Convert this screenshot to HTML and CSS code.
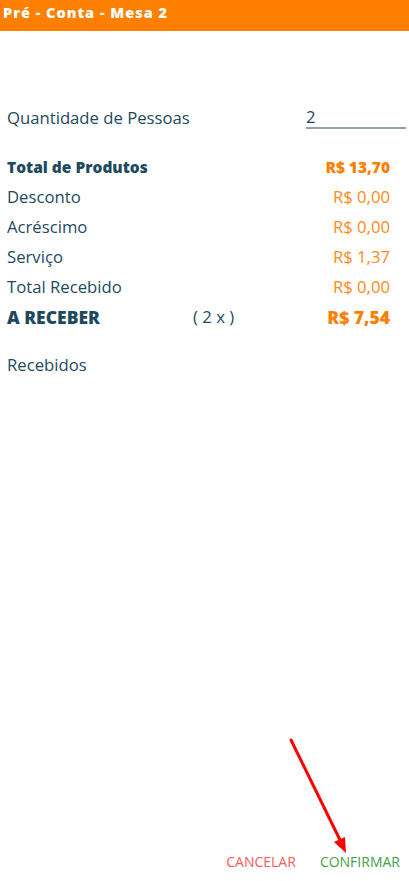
FILE: index.html
```html
<!DOCTYPE html>
<html lang="pt">
<head>
<meta charset="utf-8">
<title>Pré - Conta - Mesa 2</title>
<link rel="stylesheet" href="styles.css">
</head>
<body>
<div class="app">
  <header class="bar">Pré - Conta - Mesa 2</header>
  <main class="content">
    <div class="people">
      <span class="people-label">Quantidade de Pessoas</span>
      <span class="people-input">2</span>
    </div>
    <div class="totals">
      <div class="row strong"><span>Total de Produtos</span><span class="val">R$ 13,70</span></div>
      <div class="row"><span>Desconto</span><span class="val">R$ 0,00</span></div>
      <div class="row"><span>Acréscimo</span><span class="val">R$ 0,00</span></div>
      <div class="row"><span>Serviço</span><span class="val">R$ 1,37</span></div>
      <div class="row"><span>Total Recebido</span><span class="val">R$ 0,00</span></div>
      <div class="row strong big"><span class="lbl">A RECEBER</span><span class="mult">( 2 x )</span><span class="val">R$ 7,54</span></div>
    </div>
    <div class="received">Recebidos</div>
  </main>
  <footer class="actions">
    <span class="btn cancel">CANCELAR</span>
    <span class="btn confirm">CONFIRMAR</span>
  </footer>
  <svg class="arrow" width="409" height="881" viewBox="0 0 409 881">
    <line x1="291" y1="740" x2="341" y2="842" stroke="#ff0000" stroke-width="3" stroke-linecap="round"/>
    <polygon points="346,853 334,842 345,837" fill="#ff0000"/>
  </svg>
</div>
</body>
</html>
```
FILE: styles.css
```css
html, body {
  margin: 0;
  padding: 0;
  background: #ffffff;
}
.app {
  position: relative;
  width: 409px;
  height: 881px;
  display: flex;
  flex-direction: column;
  font-family: "Open Sans", "Noto Sans", sans-serif;
  color: #1e4a60;
}
.bar {
  background: #ff8000;
  color: #ffffff;
  height: 31px;
  box-sizing: border-box;
  padding: 3px 0 0 3px;
  font-family: "Open Sans", sans-serif;
  font-weight: 800;
  font-size: 14.5px;
  letter-spacing: 1px;
}
.content {
  flex: 1;
  padding: 76px 19px 0 7px;
}
.people {
  display: flex;
  justify-content: space-between;
  align-items: flex-end;
  margin-right: -16px;
}
.people-label {
  font-size: 16.7px;
  line-height: 22px;
}
.people-input {
  width: 100px;
  border-bottom: 2px solid #8fa3ae;
  font-size: 16.7px;
  line-height: 20px;
  box-sizing: border-box;
}
.totals {
  margin-top: 23px;
}
.row {
  display: flex;
  justify-content: space-between;
  font-size: 16.7px;
  line-height: 30px;
}
.row .val {
  color: #ff8a1a;
}
.row.strong {
  font-weight: 800;
  font-size: 15.5px;
}
.row.strong .val {
  color: #ff7f00;
}
.row.big {
  font-size: 17.5px;
}
.row .lbl {
  width: 186px;
}
.row .mult {
  flex: 1;
  font-weight: 400;
  font-size: 16.7px;
}
.received {
  margin-top: 22px;
  font-size: 16.7px;
  line-height: 22px;
}
.actions {
  display: flex;
  justify-content: flex-end;
  gap: 24px;
  padding: 0 9px 7px 0;
  height: 26px;
  align-items: center;
}
.btn {
  font-size: 14px;
}
.cancel { color: #ff5a5a; }
.confirm { color: #43a047; }
.arrow {
  position: absolute;
  left: 0;
  top: 0;
  pointer-events: none;
}
```
